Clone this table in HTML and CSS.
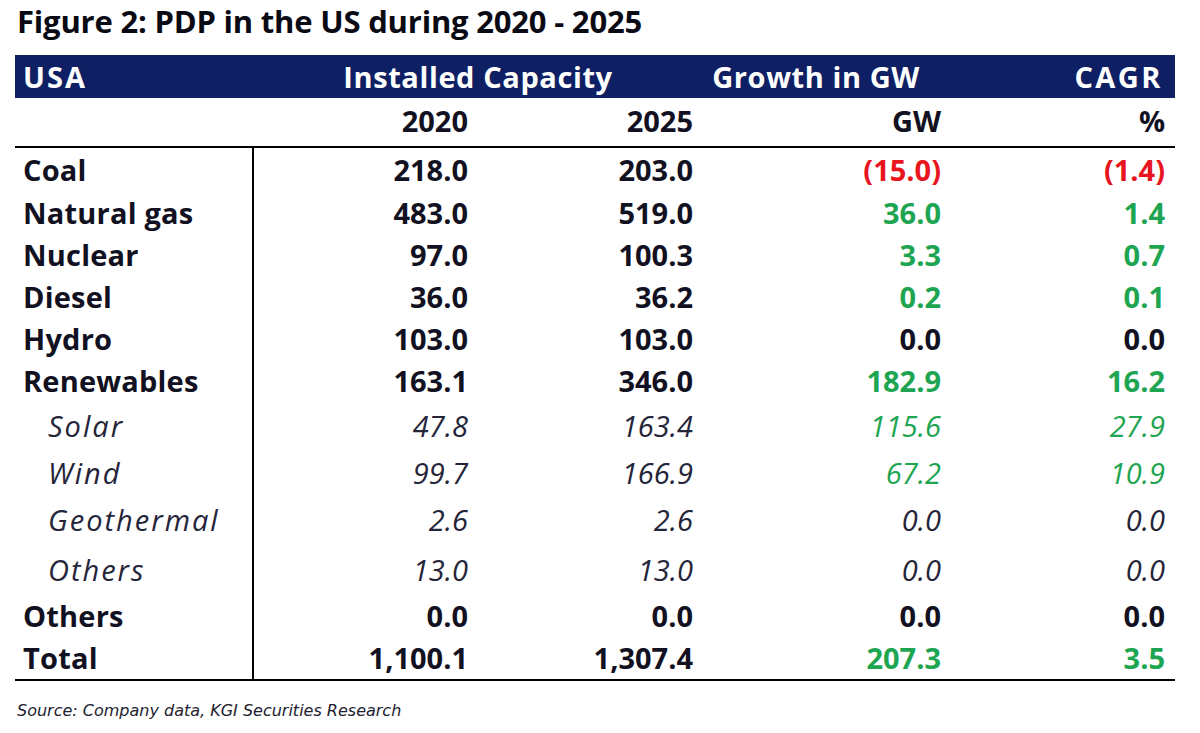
FILE: index.html
```html
<!DOCTYPE html>
<html>
<head>
<meta charset="utf-8">
<link rel="stylesheet" href="styles.css">
</head>
<body>
<div class="page">
  <h1 class="title">Figure 2: PDP in the US during 2020 - 2025</h1>
  <table class="pdp">
    <colgroup>
      <col class="c-label"><col class="c-num"><col class="c-num"><col class="c-gw"><col class="c-pct">
    </colgroup>
    <thead>
      <tr class="band">
        <th class="lbl">USA</th>
        <th colspan="2" class="center">Installed Capacity</th>
        <th class="growth">Growth in GW</th>
        <th class="cagr">CAGR</th>
      </tr>
      <tr class="sub">
        <th></th>
        <th>2020</th>
        <th>2025</th>
        <th>GW</th>
        <th>%</th>
      </tr>
    </thead>
    <tbody>
      <tr class="main first"><td>Coal</td><td>218.0</td><td>203.0</td><td class="neg">(15.0)</td><td class="neg">(1.4)</td></tr>
      <tr class="main"><td>Natural gas</td><td>483.0</td><td>519.0</td><td class="pos">36.0</td><td class="pos">1.4</td></tr>
      <tr class="main"><td>Nuclear</td><td>97.0</td><td>100.3</td><td class="pos">3.3</td><td class="pos">0.7</td></tr>
      <tr class="main"><td>Diesel</td><td>36.0</td><td>36.2</td><td class="pos">0.2</td><td class="pos">0.1</td></tr>
      <tr class="main"><td>Hydro</td><td>103.0</td><td>103.0</td><td>0.0</td><td>0.0</td></tr>
      <tr class="main"><td>Renewables</td><td>163.1</td><td>346.0</td><td class="pos">182.9</td><td class="pos">16.2</td></tr>
      <tr class="sub-item"><td>Solar</td><td>47.8</td><td>163.4</td><td class="pos">115.6</td><td class="pos">27.9</td></tr>
      <tr class="sub-item"><td>Wind</td><td>99.7</td><td>166.9</td><td class="pos">67.2</td><td class="pos">10.9</td></tr>
      <tr class="sub-item"><td>Geothermal</td><td>2.6</td><td>2.6</td><td>0.0</td><td>0.0</td></tr>
      <tr class="sub-item last-sub"><td>Others</td><td>13.0</td><td>13.0</td><td>0.0</td><td>0.0</td></tr>
      <tr class="main"><td>Others</td><td>0.0</td><td>0.0</td><td>0.0</td><td>0.0</td></tr>
      <tr class="main total"><td>Total</td><td>1,100.1</td><td>1,307.4</td><td class="pos">207.3</td><td class="pos">3.5</td></tr>
    </tbody>
  </table>
  <p class="source">Source: Company data, KGI Securities Research</p>
</div>
</body>
</html>
```

FILE: styles.css
```css
html, body {
  margin: 0;
  padding: 0;
  background: #ffffff;
}

.page {
  padding-left: 15px;
  width: 1160px;
  font-family: "Open Sans", "Noto Sans", "DejaVu Sans", sans-serif;
  color: #111122;
}

.title {
  margin: 0;
  padding: 2px 0 0 2px;
  height: 46px;
  box-sizing: border-box;
  font-size: 31px;
  font-weight: 700;
  line-height: 38px;
  letter-spacing: -0.2px;
  color: #0a0a14;
}

.pdp {
  width: 1160px;
  border-collapse: collapse;
  table-layout: fixed;
  border-top: 2px solid #000;
  border-bottom: 2px solid #000;
  margin-top: 4px;
}

.c-label { width: 238px; }
.c-num { width: 225px; }
.c-gw { width: 248px; }
.c-pct { width: 224px; }

.pdp th, .pdp td {
  padding: 0 10px 0 0;
  text-align: right;
  font-size: 29px;
  font-weight: 700;
  white-space: nowrap;
}

.band th {
  background: #0e1f63;
  color: #ffffff;
  height: 43px;
  line-height: 43px;
  letter-spacing: 0.6px;
  border-top: 5px solid #fff;
}
.band th.lbl { text-align: left; padding-left: 8px; letter-spacing: 2px; }
.band th.center { text-align: center; padding-right: 0; }
.band th.growth { padding-right: 31px; }
.band th.cagr { padding-right: 12px; letter-spacing: 2.5px; }

.sub th {
  height: 46px;
  line-height: 42px;
  vertical-align: top;
  padding-top: 2px;
  border-bottom: 2px solid #000;
}

.pdp td:first-child {
  text-align: left;
  border-right: 2px solid #000;
  padding-left: 8px;
  letter-spacing: 0.2px;
}

.main td {
  height: 42px;
  line-height: 42px;
}
.main.first td { height: 44px; padding-top: 0; }

.sub-item td {
  height: 47px;
  line-height: 47px;
  font-weight: 400;
  font-style: italic;
  color: #25253a;
}
.sub-item td:first-child {
  padding-left: 33px;
  letter-spacing: 2px;
}
.sub-item.last-sub td { height: 52px; }

.pdp td.neg { color: #e8141e; }
.pdp td.pos { color: #1ea552; }

.source {
  margin: 20px 0 0 2px;
  font-family: "DejaVu Sans", "Open Sans", sans-serif;
  font-size: 16px;
  line-height: 19px;
  font-style: italic;
  color: #222230;
  letter-spacing: 0;
}
```
